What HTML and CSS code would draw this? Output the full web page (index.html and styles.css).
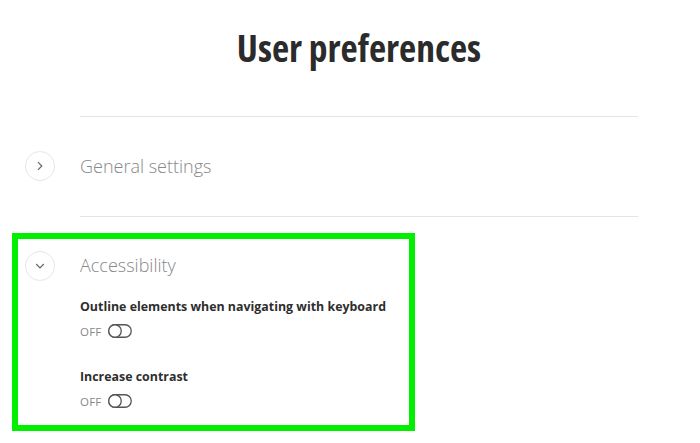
FILE: index.html
```html
<!DOCTYPE html>
<html>
<head>
<meta charset="utf-8">
<link rel="stylesheet" href="styles.css">
</head>
<body>
<main class="page">
  <h1 class="title">User preferences</h1>

  <section class="item">
    <div class="icon-cell">
      <span class="circle">
        <svg width="10" height="10" viewBox="0 0 10 10"><path d="M3 1.2 L6.8 5 L3 8.8" fill="none" stroke="#666" stroke-width="1.2"/></svg>
      </span>
    </div>
    <div class="content">
      <h2 class="item-title">General settings</h2>
    </div>
  </section>

  <section class="item open">
    <div class="icon-cell">
      <span class="circle">
        <svg width="10" height="10" viewBox="0 0 10 10"><path d="M1.2 3 L5 6.8 L8.8 3" fill="none" stroke="#666" stroke-width="1.2"/></svg>
      </span>
    </div>
    <div class="content">
      <h2 class="item-title">Accessibility</h2>
      <div class="option">
        <div class="opt-label">Outline elements when navigating with keyboard</div>
        <div class="opt-state"><span class="off">OFF</span>
          <svg class="toggle" width="24" height="14" viewBox="0 0 24 14"><rect x="0.75" y="0.75" width="22.5" height="12.5" rx="6.25" fill="none" stroke="#555" stroke-width="1.3"/><circle cx="7" cy="7" r="6.25" fill="#fff" stroke="#555" stroke-width="1.3"/></svg>
        </div>
      </div>
      <div class="option">
        <div class="opt-label">Increase contrast</div>
        <div class="opt-state"><span class="off">OFF</span>
          <svg class="toggle" width="24" height="14" viewBox="0 0 24 14"><rect x="0.75" y="0.75" width="22.5" height="12.5" rx="6.25" fill="none" stroke="#555" stroke-width="1.3"/><circle cx="7" cy="7" r="6.25" fill="#fff" stroke="#555" stroke-width="1.3"/></svg>
        </div>
      </div>
    </div>
  </section>
  <div class="highlight"></div>
</main>
</body>
</html>
```

FILE: styles.css
```css
html, body {
  margin: 0;
  background: #fff;
}
body {
  font-family: "Open Sans", "Liberation Sans", sans-serif;
  color: #333;
}
.page {
  position: relative;
  display: grid;
  grid-template-columns: 80px 558px;
  padding-bottom: 20px;
}
.title {
  grid-column: 2;
  margin: 20px 0 40px;
  height: 56px;
  line-height: 56px;
  text-align: center;
  font-size: 37.5px;
  font-weight: 700;
  font-stretch: 75%;
  color: #2b2b2b;
}
.item {
  grid-column: 1 / span 2;
  display: grid;
  grid-template-columns: 80px 558px;
}
.icon-cell {
  display: flex;
  justify-content: center;
  padding-top: 35px;
}
.circle {
  width: 28px;
  height: 28px;
  border: 1px solid #e6e6e6;
  border-radius: 50%;
  display: flex;
  align-items: center;
  justify-content: center;
}
.content {
  border-top: 1px solid #e4e4e4;
}
.item-title {
  margin: 0;
  padding: 35px 0 36px;
  line-height: 28px;
  font-size: 18px;
  font-weight: 300;
  color: #888;
}
.open .item-title {
  padding-top: 34px;
  padding-bottom: 19px;
}
.option {
  margin-bottom: 29px;
}
.opt-label {
  font-size: 12.4px;
  line-height: 18px;
  font-weight: 700;
  color: #2e2e2e;
}
.opt-state {
  display: flex;
  align-items: center;
  gap: 7px;
  margin-top: 7px;
  height: 16px;
}
.off {
  font-size: 11.5px;
  color: #888;
  letter-spacing: 0.2px;
}
.highlight {
  position: absolute;
  left: 12px;
  top: 233px;
  width: 391px;
  height: 186px;
  border: 6px solid #00f000;
}
```
